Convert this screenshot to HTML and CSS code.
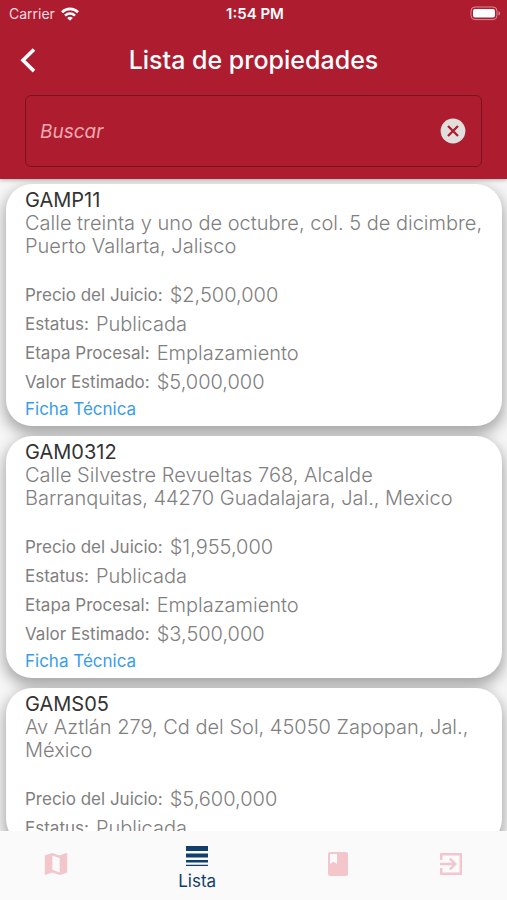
FILE: index.html
```html
<!doctype html>
<html lang="es">
	<head>
		<meta charset="utf-8">
		<title>Lista de propiedades</title>
		<meta name="viewport" content="width=device-width, initial-scale=1.0">
		<link rel="stylesheet" href="styles.css">
	</head>
	<body>
	<header class="header">
		<div class="status">
			<div class="carrier">
				<span>Carrier</span>
				<svg width="18" height="14" viewBox="0 0 18 14" fill="none" stroke="#fff" stroke-width="2.6">
					<path d="M1 5.2C5.6.8 12.4.8 17 5.2"/>
					<path d="M4 8.6c2.9-2.7 7.1-2.7 10 0"/>
					<path d="M9 13.8l-2.8-2.9c1.6-1.4 4-1.4 5.6 0z" fill="#fff" stroke="none"/>
				</svg>
			</div>
			<span class="clock">1:54 PM</span>
			<svg class="battery" width="31" height="15" viewBox="0 0 31 15">
				<rect x="1" y="1" width="26" height="12.6" rx="4" fill="none" stroke="#d98c96"/>
				<rect x="3" y="3" width="22" height="8.6" rx="2" fill="#fff"/>
				<path d="M28.5 5.2c2 .6 2 3.6 0 4.2z" fill="#d98c96"/>
			</svg>
		</div>
		<div class="bar">
			<button class="back" type="button" aria-label="Regresar">
				<svg width="18" height="26" viewBox="0 0 18 26" fill="none" stroke="#fff" stroke-width="3.6">
					<path d="M15 2.5L4 13.3l11 10.8"/>
				</svg>
			</button>
			<h1>Lista de propiedades</h1>
		</div>
		<form class="search">
			<input type="text" placeholder="Buscar" aria-label="Buscar">
			<button type="button" aria-label="Borrar">
				<svg width="26" height="26" viewBox="0 0 26 26">
					<circle cx="13" cy="13" r="12.4" fill="#e0dfdc"/>
					<path d="M8 8l10 10M18 8L8 18" stroke="#ae1c2f" stroke-width="2.3"/>
				</svg>
			</button>
		</form>
	</header>

	<main class="list">
		<article class="card">
			<h2>GAMP11</h2>
			<p>Calle treinta y uno de octubre, col. 5 de dicimbre, Puerto Vallarta, Jalisco</p>
			<dl>
				<div><dt>Precio del Juicio:</dt><dd>$2,500,000</dd></div>
				<div><dt>Estatus:</dt><dd>Publicada</dd></div>
				<div><dt>Etapa Procesal:</dt><dd>Emplazamiento</dd></div>
				<div><dt>Valor Estimado:</dt><dd>$5,000,000</dd></div>
			</dl>
			<a href="#">Ficha Técnica</a>
		</article>
		<article class="card">
			<h2>GAM0312</h2>
			<p>Calle Silvestre Revueltas 768, Alcalde Barranquitas, 44270 Guadalajara, Jal., Mexico</p>
			<dl>
				<div><dt>Precio del Juicio:</dt><dd>$1,955,000</dd></div>
				<div><dt>Estatus:</dt><dd>Publicada</dd></div>
				<div><dt>Etapa Procesal:</dt><dd>Emplazamiento</dd></div>
				<div><dt>Valor Estimado:</dt><dd>$3,500,000</dd></div>
			</dl>
			<a href="#">Ficha Técnica</a>
		</article>
		<article class="card">
			<h2>GAMS05</h2>
			<p>Av Aztlán 279, Cd del Sol, 45050 Zapopan, Jal., México</p>
			<dl>
				<div><dt>Precio del Juicio:</dt><dd>$5,600,000</dd></div>
				<div><dt>Estatus:</dt><dd>Publicada</dd></div>
			</dl>
		</article>
	</main>

	<nav class="tabs">
		<a href="#" aria-label="Mapa">
			<svg width="24" height="24" viewBox="0 0 24 24" fill="#f2c6cb">
				<path d="M22.5 1l-.3.1L15.7 3.6 8.3 1 1.3 3.3c-.3.1-.5.3-.5.6V22.3c0 .4.3.6.6.6l.3-.1L8.3 20.4l7.4 2.6 7-2.3c.3-.1.5-.3.5-.6V1.6c0-.3-.3-.6-.7-.6zM15.7 20.4l-7.4-2.6V3.6l7.4 2.6z"/>
			</svg>
		</a>
		<a href="#" class="active" aria-current="page">
			<svg width="24" height="22" viewBox="0 0 24 22" fill="#123e6d">
				<path d="M1 1h22v5H1zM1 8.5h22v4H1zM1 15h22v2.5H1zM1 19.7h22V21H1z"/>
			</svg>
			<span>Lista</span>
		</a>
		<a href="#" aria-label="Expedientes">
			<svg width="24" height="26" viewBox="0 0 24 26" fill="#f2c6cb">
				<path d="M4 1h16a2 2 0 0 1 2 2v20a2 2 0 0 1-2 2H4a2 2 0 0 1-2-2V3a2 2 0 0 1 2-2zm0 2v10l3.500-2.300L11 13V3z" fill-rule="evenodd"/>
			</svg>
		</a>
		<a href="#" aria-label="Salir">
			<svg width="24" height="24" viewBox="0 0 24 24" fill="none" stroke="#f2c6cb" stroke-width="2.4">
				<path d="M2.2 8V2.2h19.6v19.6H2.2V16" stroke-linejoin="round"/>
				<path d="M1 12h15M10.8 6.5l5.5 5.5-5.5 5.5"/>
			</svg>
		</a>
	</nav>
	</body>
</html>
```
FILE: styles.css
```css
*{margin: 0;padding: 0;box-sizing: border-box;}
a{text-decoration: none;}
button{border: 0;background: none;cursor: pointer;}
svg{display: block;}

body{
	display: flex;
	flex-direction: column;
	height: 100vh;
	overflow: hidden;
	background: #f6f6f6;
	font-family: Inter, "Liberation Sans", sans-serif;
}

/* header */
.header{
	position: relative;
	z-index: 1;
	flex: none;
	padding-bottom: 12px;
	background: #ae1c2f;
	box-shadow: 0 1px 4px rgba(0,0,0,.3);
	color: #fff;
}
.status{
	display: grid;
	grid-template-columns: 1fr auto 1fr;
	align-items: center;
	height: 27px;
	padding: 0 6px 0 9px;
	font-size: 14px;
}
.carrier{
	display: flex;
	align-items: center;
	gap: 6px;
	color: #f8dfe2;
}
.clock{
	font-size: 15px;
	font-weight: 600;
}
.battery{
	justify-self: end;
}
.bar{
	display: grid;
	grid-template-columns: 40px 1fr 40px;
	align-items: center;
	height: 68px;
	padding: 0 14px 3px 14px;
}
.back{
	justify-self: start;
	width: 24px;
	padding-left: 5px;
}
.bar h1{
	font-size: 25px;
	font-weight: 500;
	text-align: center;
	white-space: nowrap;
}
.search{
	display: flex;
	align-items: center;
	height: 72px;
	margin: 0 25px;
	padding: 0 15px 0 14px;
	border: 1px solid #7c1220;
	border-radius: 6px;
}
.search input{
	flex: 1;
	min-width: 0;
	border: 0;
	outline: 0;
	background: none;
	color: #fff;
	font: italic 19px Inter, "Liberation Sans", sans-serif;
}
.search input::placeholder{
	color: #f0a9b0;
	opacity: 1;
}

/* cards */
.list{
	flex: 1;
	min-height: 0;
	padding: 5px 5px 5px 6px;
	overflow-y: auto;
	scrollbar-width: none;
}
.card{
	margin-bottom: 10px;
	padding: 5px 19px 3px;
	border-radius: 26px;
	background: #fff;
	box-shadow: 0 6px 14px 2px rgba(0,0,0,.32);
}
.card h2{
	color: #333;
	font-size: 20px;
	font-weight: 400;
	line-height: 23px;
}
.card p{
	color: #808080;
	font-size: 20px;
	font-weight: 300;
	line-height: 23px;
}
.card dl{
	margin-top: 22px;
}
.card dl div{
	display: flex;
	align-items: center;
	gap: 7px;
	height: 29px;
}
.card dt{
	color: #808080;
	font-size: 17px;
}
.card dd{
	color: #808080;
	font-size: 20px;
	font-weight: 300;
}
.card a{
	display: block;
	color: #3a9cec;
	font-size: 17px;
	line-height: 27px;
}

/* bottom tabs */
.tabs{
	position: relative;
	z-index: 1;
	display: flex;
	flex: none;
	height: 69px;
	background: #fafafa;
}
.tabs a{
	display: flex;
	flex: 1;
	flex-direction: column;
	align-items: center;
	justify-content: center;
	gap: 4px;
	padding-bottom: 3px;
	color: #123e6d;
	font-size: 17px;
	line-height: 20px;
}
.tabs .active{
	flex: 1.5;
	padding: 4px 0 0;
}
```
